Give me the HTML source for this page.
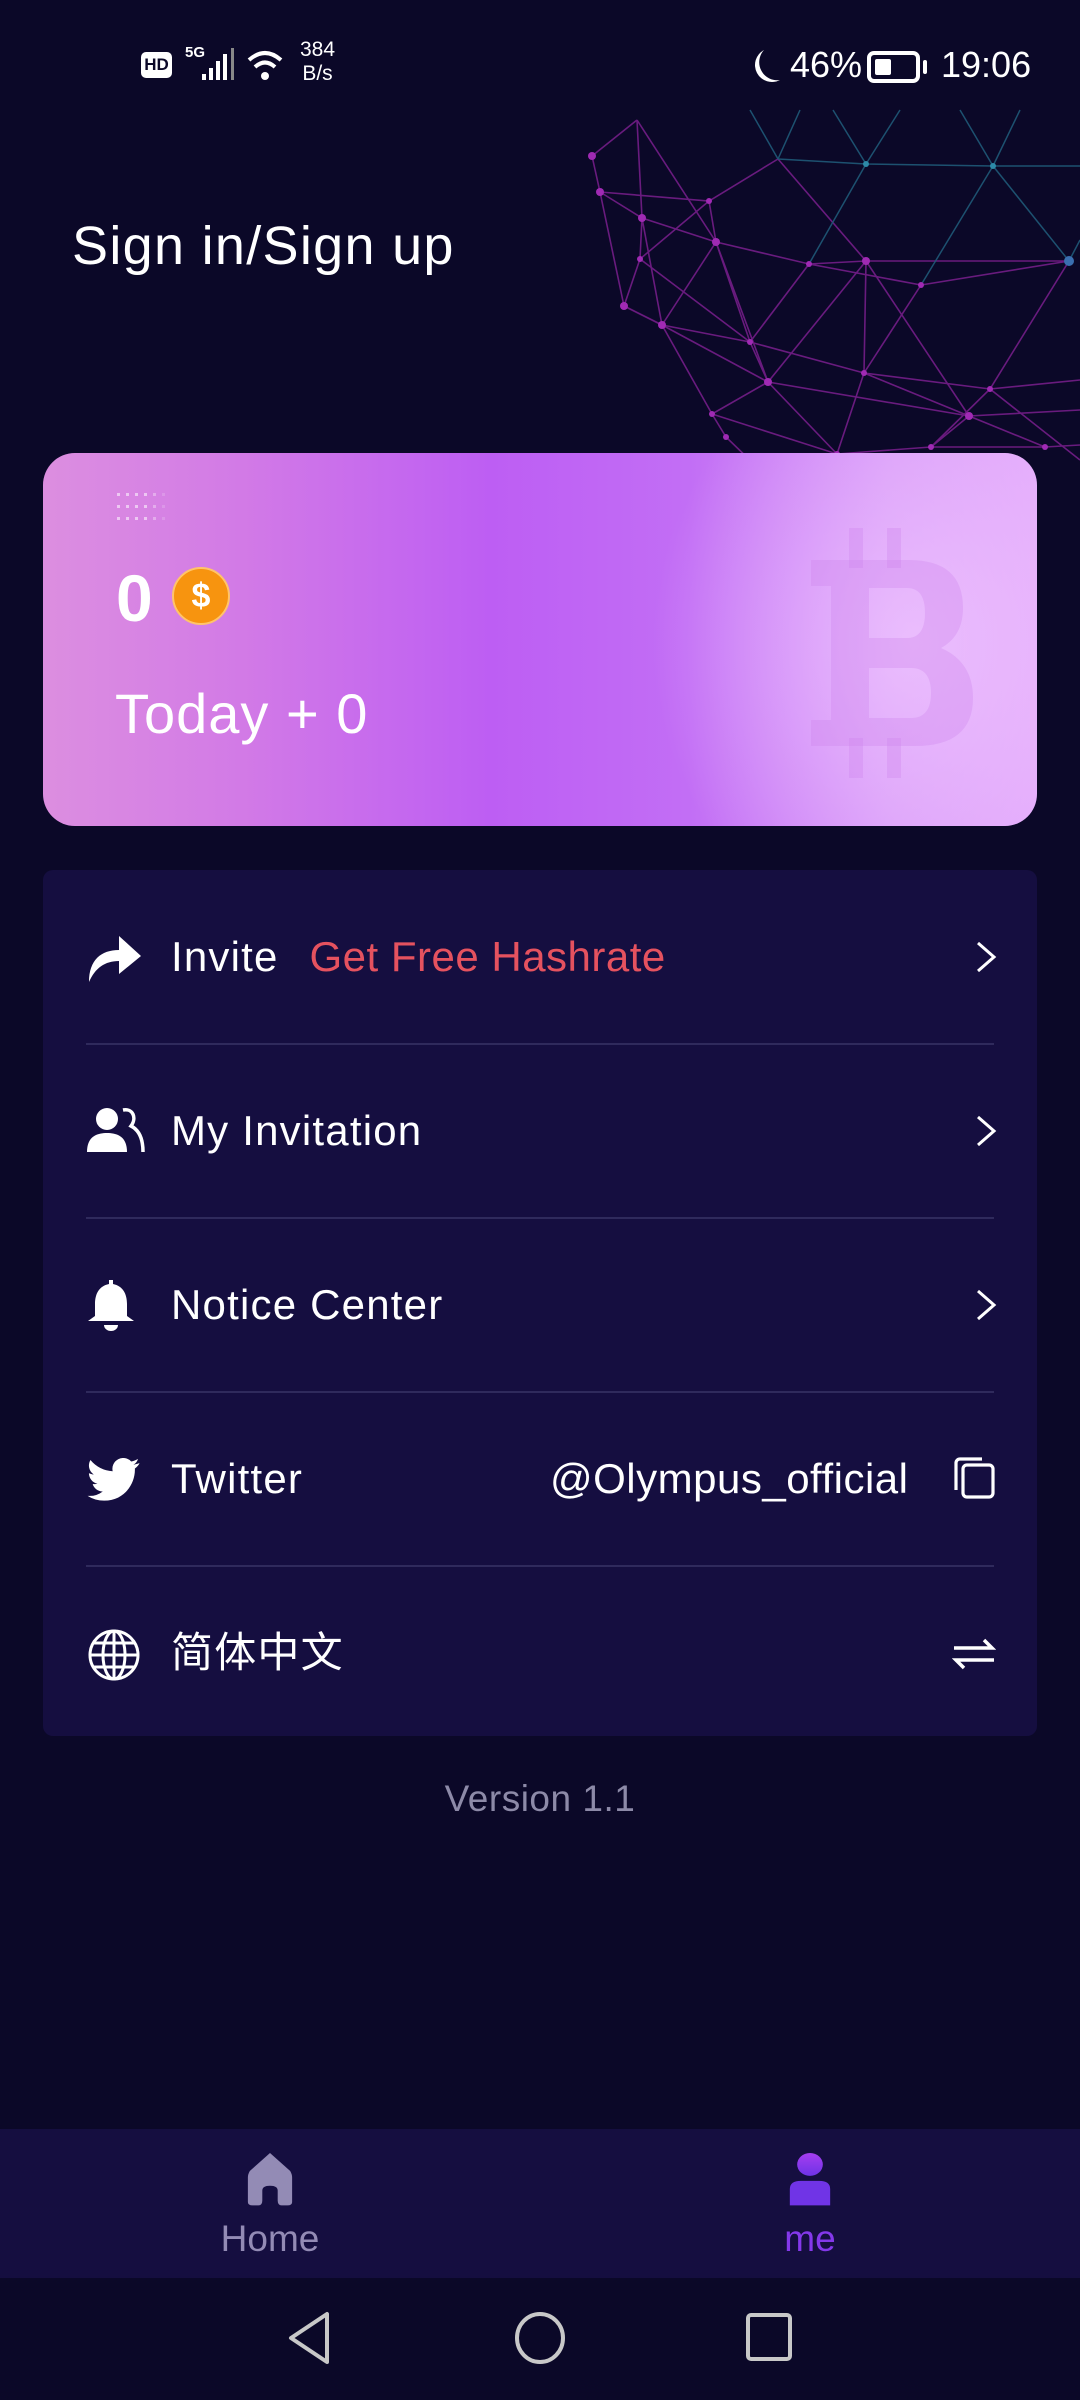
<!DOCTYPE html>
<html><head><meta charset="utf-8"><style>
*{margin:0;padding:0;box-sizing:border-box}
body{width:1080px;height:2400px;background:#0b0828;font-family:"Liberation Sans","Noto Sans CJK SC",sans-serif;color:#fff;position:relative;overflow:hidden}
.abs{position:absolute}
.card{left:43px;top:453px;width:994px;height:373px;border-radius:32px;overflow:hidden;
background:radial-gradient(ellipse 260px 300px at 870px 190px,rgba(240,200,255,.75),rgba(240,200,255,0) 100%),
linear-gradient(90deg,#dc8ee0 0%,#d27ae6 20%,#bd5ef3 45%,#c26ef5 65%,#d89af8 85%,#e3a9fb 100%)}
.list{left:43px;top:870px;width:994px;height:866px;background:#150e40;border-radius:10px}
.row{position:absolute;left:0;width:994px;height:174px}
.row .t{position:absolute;left:128px;top:0;line-height:174px;font-size:42px;letter-spacing:1.2px}
.div{position:absolute;left:43px;width:908px;height:2px;background:#2f2a5c}
.chev{position:absolute;left:932px;top:70px}
.ico{position:absolute;left:44px}
</style></head><body>
<!-- status bar -->
<div class="abs" style="left:141px;top:52px;width:31px;height:26px;background:#fff;border-radius:5px;color:#0b0828;font-size:17px;font-weight:bold;text-align:center;line-height:26px">HD</div>
<div class="abs" style="left:185px;top:44px;font-size:15px;font-weight:bold">5G</div>
<svg class="abs" style="left:200px;top:48px" width="40" height="34"><rect x="2" y="26" width="4" height="6" fill="#fff"/><rect x="9" y="20" width="4" height="12" fill="#fff"/><rect x="16" y="13" width="4" height="19" fill="#fff"/><rect x="23" y="6" width="4" height="26" fill="#fff"/><rect x="31" y="0" width="3" height="32" fill="#888"/></svg>
<svg class="abs" style="left:246px;top:48px" width="42" height="36" fill="none" stroke="#fff" stroke-width="4"><path d="M3 12 Q19 -2 35 12"/><path d="M9 19 Q19 10 29 19"/><circle cx="19" cy="28" r="4" fill="#fff" stroke="none"/></svg>
<div class="abs" style="left:300px;top:38px;font-size:21px;line-height:24px;text-align:center">384<br>B/s</div>
<svg class="abs" style="left:748px;top:48px" width="34" height="38"><path d="M16 2 A17 17 0 1 0 32 32 A18 18 0 0 1 16 2Z" fill="#fff"/></svg>
<div class="abs" style="left:790px;top:44px;font-size:36px">46%</div>
<div class="abs" style="left:867px;top:51px;width:53px;height:32px;border:4px solid #fff;border-radius:7px"><div style="position:absolute;left:4px;top:4px;width:16px;height:16px;background:#fff;border-radius:2px"></div></div>
<div class="abs" style="left:923px;top:60px;width:4px;height:14px;background:#fff;border-radius:2px"></div>
<div class="abs" style="left:941px;top:44px;font-size:36px">19:06</div>

<!-- network globe -->
<svg class="abs" style="left:560px;top:100px" width="520" height="400" viewBox="560 100 520 400">
<g stroke="#7a1f8e" stroke-width="1.6" fill="none" opacity=".85">
<polyline points="592,156 600,192 624,306 662,325 712,414 726,437 760,470"/>
<polyline points="637,120 592,156"/>
<polyline points="600,192 642,218 716,242 809,264 866,261 1069,261"/>
<polyline points="624,306 662,325 750,342 864,373 990,389 1080,380"/>
<polyline points="662,325 768,382 969,416 1080,410"/>
<polyline points="712,414 837,454 931,447 1045,447 1080,445"/>
<polyline points="637,120 642,218 640,259 624,306"/>
<polyline points="637,120 716,242 750,342 768,382 837,454"/>
<polyline points="709,201 716,242"/><polyline points="600,192 709,201 778,159"/>
<polyline points="642,218 662,325"/><polyline points="640,259 709,201"/>
<polyline points="716,242 662,325"/><polyline points="716,242 768,382 712,414"/>
<polyline points="809,264 750,342"/><polyline points="866,261 768,382"/>
<polyline points="866,261 864,373 837,454"/><polyline points="866,261 969,416"/>
<polyline points="921,285 864,373"/><polyline points="921,285 1069,261"/><polyline points="809,264 921,285"/>
<polyline points="1069,261 990,389 931,447"/><polyline points="990,389 1080,460"/>
<polyline points="864,373 969,416 1045,447"/><polyline points="969,416 931,447"/>
<polyline points="778,159 866,261"/><polyline points="640,259 750,342"/>
</g>
<g stroke="#1f5a78" stroke-width="1.5" fill="none" opacity=".9">
<polyline points="778,159 866,164 993,166 1080,166"/>
<polyline points="866,164 833,110"/><polyline points="866,164 900,110"/>
<polyline points="993,166 960,110"/><polyline points="993,166 1020,110"/>
<polyline points="993,166 1069,261"/><polyline points="866,164 809,264"/><polyline points="993,166 921,285"/>
<polyline points="778,159 800,110"/><polyline points="778,159 750,110"/><polyline points="1069,261 1080,240"/>
</g>
<g fill="#a02ab4">
<circle cx="592" cy="156" r="4"/><circle cx="600" cy="192" r="4"/><circle cx="624" cy="306" r="4"/><circle cx="662" cy="325" r="4"/><circle cx="712" cy="414" r="3"/><circle cx="726" cy="437" r="3"/><circle cx="642" cy="218" r="4"/><circle cx="716" cy="242" r="4"/><circle cx="640" cy="259" r="3"/><circle cx="709" cy="201" r="3"/><circle cx="809" cy="264" r="3"/><circle cx="866" cy="261" r="4"/><circle cx="921" cy="285" r="3"/><circle cx="750" cy="342" r="3"/><circle cx="768" cy="382" r="4"/><circle cx="864" cy="373" r="3"/><circle cx="990" cy="389" r="3"/><circle cx="969" cy="416" r="4"/><circle cx="837" cy="454" r="3"/><circle cx="931" cy="447" r="3"/><circle cx="1045" cy="447" r="3"/>
</g>
<g fill="#2d8aa8"><circle cx="866" cy="164" r="3"/><circle cx="993" cy="166" r="3"/><circle cx="1069" cy="261" r="5" fill="#3a6fb0"/></g>
</svg>

<div class="abs" style="left:72px;top:215px;font-size:54px;letter-spacing:1.3px">Sign in/Sign up</div>

<!-- card -->
<div class="abs card">
  <svg class="abs" style="left:74px;top:38px" width="70" height="32"><g fill="rgba(255,255,255,.55)">
  <rect x="0" y="2" width="3" height="3"/><rect x="9" y="2" width="3" height="3"/><rect x="18" y="2" width="3" height="3"/><rect x="27" y="2" width="3" height="3"/><rect x="36" y="2" width="3" height="3" opacity=".6"/><rect x="45" y="2" width="3" height="3" opacity=".3"/>
  <rect x="0" y="14" width="3" height="3"/><rect x="9" y="14" width="3" height="3"/><rect x="18" y="14" width="3" height="3"/><rect x="27" y="14" width="3" height="3"/><rect x="36" y="14" width="3" height="3" opacity=".6"/><rect x="45" y="14" width="3" height="3" opacity=".3"/>
  <rect x="0" y="26" width="3" height="3"/><rect x="9" y="26" width="3" height="3"/><rect x="18" y="26" width="3" height="3"/><rect x="27" y="26" width="3" height="3"/><rect x="36" y="26" width="3" height="3" opacity=".6"/><rect x="45" y="26" width="3" height="3" opacity=".3"/></g></svg>
  <svg class="abs" style="left:748px;top:75px" width="190" height="250" viewBox="0 0 190 250"><g fill="rgba(205,130,235,.32)">
  <rect x="58" y="0" width="14" height="40"/><rect x="96" y="0" width="14" height="40"/>
  <rect x="58" y="210" width="14" height="40"/><rect x="96" y="210" width="14" height="40"/>
  <path d="M20 32 H118 Q172 32 172 80 Q172 108 150 120 Q182 134 182 170 Q182 218 124 218 H20 V192 H40 V58 H20Z M78 60 V110 H116 Q134 110 134 85 Q134 60 116 60Z M78 140 V190 H120 Q140 190 140 165 Q140 140 120 140Z" fill-rule="evenodd"/></g></svg>
  <div class="abs" style="left:73px;top:107px;font-size:66px;font-weight:bold">0</div>
  <div class="abs" style="left:129px;top:114px;width:58px;height:58px;border-radius:50%;background:#f7940f;border:2px solid #ffc46a;text-align:center;line-height:54px;font-size:34px;font-weight:bold">$</div>
  <div class="abs" style="left:72px;top:228px;font-size:56px;letter-spacing:1px">Today + 0</div>
</div>

<!-- list -->
<div class="abs list">
  <div class="row" style="top:0">
    <svg class="ico" style="top:60px" width="56" height="56" viewBox="0 0 56 56"><path d="M2 52 C2 30 14 20 32 20 L32 6 L54 26 L32 44 L32 31 C18 31 8 38 2 52Z" fill="#fff"/></svg>
    <div class="t">Invite <span style="color:#e5525f;margin-left:18px;letter-spacing:0.5px">Get Free Hashrate</span></div>
    <svg class="chev" width="22" height="34"><path d="M3 3 L19 17 L3 31" stroke="#fff" stroke-width="3" fill="none"/></svg>
  </div>
  <div class="div" style="top:173px"></div>
  <div class="row" style="top:174px">
    <svg class="ico" style="top:62px" width="58" height="50" viewBox="0 0 58 50"><circle cx="20" cy="13" r="11" fill="#fff"/><path d="M0 46 C0 32 8 27 20 27 C32 27 40 32 40 46Z" fill="#fff"/><path d="M36 4 C46 2 50 12 44 20 C52 24 56 32 56 46" stroke="#fff" stroke-width="3.5" fill="none"/></svg>
    <div class="t">My Invitation</div>
    <svg class="chev" width="22" height="34"><path d="M3 3 L19 17 L3 31" stroke="#fff" stroke-width="3" fill="none"/></svg>
  </div>
  <div class="div" style="top:347px"></div>
  <div class="row" style="top:348px">
    <svg class="ico" style="top:60px" width="48" height="54" viewBox="0 0 48 54"><path d="M22 2 h4 v4 C36 8 40 16 40 26 L40 38 L47 43 L1 43 L8 38 L8 26 C8 16 12 8 22 6Z" fill="#fff"/><path d="M17 47 h14 a7 6 0 0 1 -14 0Z" fill="#fff"/></svg>
    <div class="t">Notice Center</div>
    <svg class="chev" width="22" height="34"><path d="M3 3 L19 17 L3 31" stroke="#fff" stroke-width="3" fill="none"/></svg>
  </div>
  <div class="div" style="top:521px"></div>
  <div class="row" style="top:522px">
    <svg class="ico" style="top:66px" width="54" height="44" viewBox="0 0 24 20"><path d="M23.6 2.3c-.9.4-1.8.6-2.8.8 1-.6 1.8-1.5 2.1-2.7-.9.6-2 1-3.1 1.2A4.9 4.9 0 0 0 11.4 6 13.9 13.9 0 0 1 1.3.9a4.9 4.9 0 0 0 1.5 6.6c-.8 0-1.6-.3-2.2-.6 0 2.4 1.7 4.4 3.9 4.8-.7.2-1.5.2-2.2.1.6 2 2.4 3.4 4.6 3.4A9.9 9.9 0 0 1 0 17.2 13.9 13.9 0 0 0 7.5 19.4c9.1 0 14-7.5 14-14v-.6c1-.7 1.8-1.6 2.1-2.5z" fill="#fff"/></svg>
    <div class="t">Twitter</div>
    <div class="abs" style="left:507px;top:0;line-height:174px;font-size:42px;letter-spacing:0.5px">@Olympus_official</div>
    <svg class="abs" style="left:909px;top:64px" width="44" height="44" viewBox="0 0 44 44" fill="none" stroke="#fff" stroke-width="3.2"><rect x="11" y="9" width="30" height="32" rx="4"/><path d="M4 34 V7 a4 4 0 0 1 4 -4 H30"/></svg>
  </div>
  <div class="div" style="top:695px"></div>
  <div class="row" style="top:696px">
    <svg class="ico" style="top:62px" width="54" height="54" viewBox="0 0 54 54" fill="none" stroke="#fff" stroke-width="3"><circle cx="27" cy="27" r="24"/><ellipse cx="27" cy="27" rx="11" ry="24"/><path d="M27 3 V51 M3 27 H51 M7 15 H47 M7 39 H47"/></svg>
    <div class="t">简体中文</div>
    <svg class="abs" style="left:909px;top:70px" width="44" height="36" fill="none" stroke="#fff" stroke-width="3.5"><path d="M2 12 H40 L32 4"/><path d="M42 24 H4 L12 32"/></svg>
  </div>
</div>

<div class="abs" style="left:0;width:1080px;top:1778px;text-align:center;font-size:37px;letter-spacing:0.5px;color:#8d8aa8">Version 1.1</div>

<!-- tab bar -->
<div class="abs" style="left:0;top:2129px;width:1080px;height:149px;background:#150e40"></div>
<svg class="abs" style="left:245px;top:2153px" width="50" height="54" viewBox="0 0 52 66" preserveAspectRatio="none"><path d="M26 0 L47 22 Q49 26 49 30 V60 Q49 64 44 64 H38 Q34 64 34 58 V46 Q34 40 26 40 Q18 40 18 46 V58 Q18 64 14 64 H8 Q3 64 3 60 V30 Q3 26 5 22Z" fill="#938bb5"/></svg>
<div class="abs" style="left:0;width:540px;text-align:center;top:2218px;font-size:37px;color:#938bb5">Home</div>
<svg class="abs" style="left:788px;top:2153px" width="44" height="54" viewBox="0 0 48 66" preserveAspectRatio="none"><defs><linearGradient id="g" x1="0" y1="0" x2="0" y2="1"><stop offset="0" stop-color="#a63ef0"/><stop offset="1" stop-color="#6d33e6"/></linearGradient></defs><ellipse cx="24" cy="14" rx="14" ry="14" fill="url(#g)"/><path d="M2 64 V44 Q2 34 14 34 H34 Q46 34 46 44 V64Z" fill="#7034e6"/></svg>
<div class="abs" style="left:540px;width:540px;text-align:center;top:2218px;font-size:37px;color:#8438ea">me</div>

<!-- nav bar -->
<svg class="abs" style="left:285px;top:2310px" width="50" height="56" fill="none" stroke="#c8c8c8" stroke-width="4" stroke-linejoin="round"><path d="M42 4 V52 L6 28Z"/></svg>
<svg class="abs" style="left:514px;top:2310px" width="52" height="56" fill="none" stroke="#c8c8c8" stroke-width="4"><ellipse cx="26" cy="28" rx="23" ry="24"/></svg>
<svg class="abs" style="left:745px;top:2312px" width="48" height="52" fill="none" stroke="#c8c8c8" stroke-width="4"><rect x="3" y="3" width="42" height="44" rx="3"/></svg>
</body></html>
